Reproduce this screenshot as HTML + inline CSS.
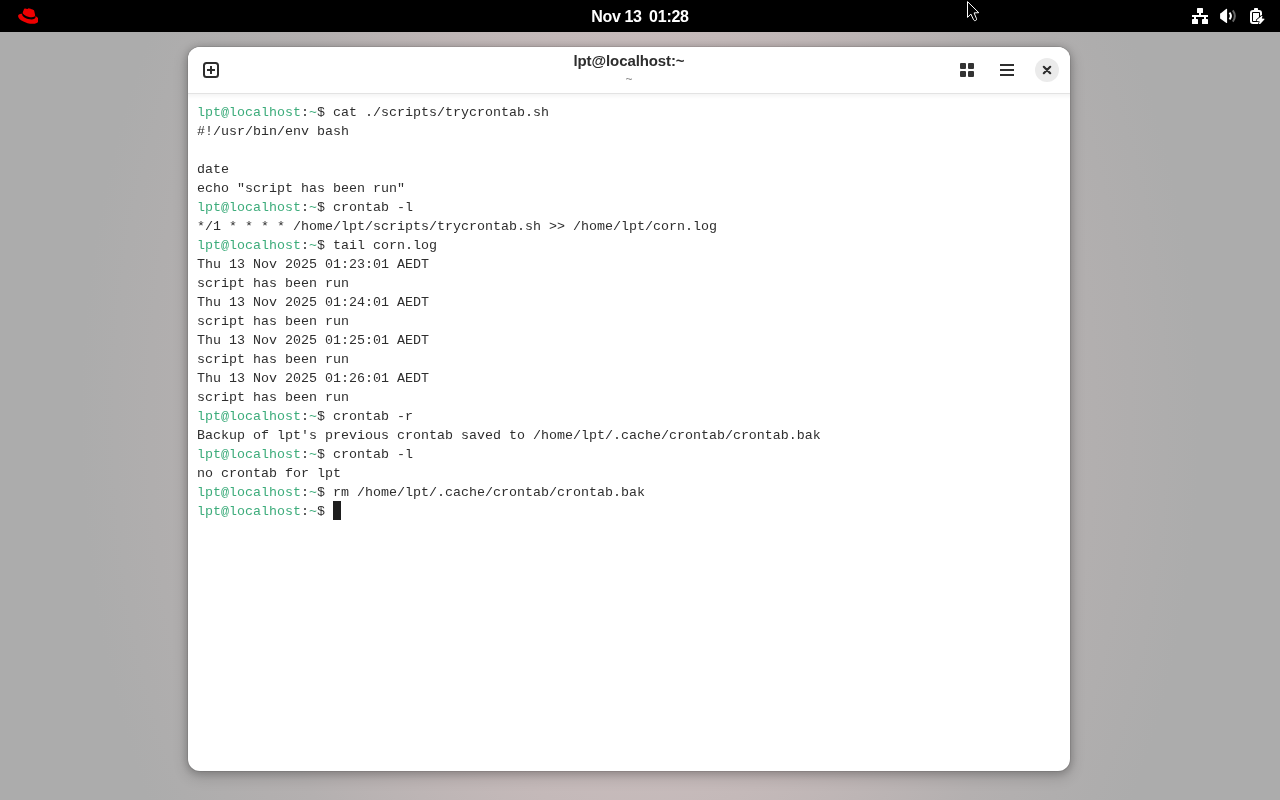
<!DOCTYPE html>
<html>
<head>
<meta charset="utf-8">
<title>lpt@localhost:~</title>
<style>
html,body{margin:0;padding:0;}
body{width:1280px;height:800px;overflow:hidden;position:relative;background:#acacac;font-family:"Liberation Sans",sans-serif;}
#bg{position:absolute;left:0;top:0;width:1280px;height:800px;
  background:radial-gradient(ellipse 560px 800px at 640px 420px, #dccacb 0%, #c4b9b9 50%, #b4b0b0 75%, #acacac 100%);}
#topbar{position:absolute;left:0;top:0;width:1280px;height:32px;background:#000;}
#clock{position:absolute;left:540px;width:200px;top:1px;height:32px;line-height:32px;text-align:center;color:#fff;font-weight:bold;font-size:16px;letter-spacing:-0.25px;word-spacing:-0.5px;white-space:pre;will-change:transform;}
#win{position:absolute;left:188px;top:47px;width:882px;height:724px;background:#fff;border-radius:12px;
  box-shadow:0 0 0 1px rgba(0,0,0,0.08),0 1px 8px 1px rgba(0,0,0,0.20),0 5px 14px 2px rgba(0,0,0,0.15);overflow:hidden;}
#hdr{position:absolute;left:0;top:0;width:882px;height:46px;border-bottom:1px solid #e3e3e3;background:#fff;}
#hdrsh{position:absolute;left:0;top:47px;width:882px;height:5px;background:linear-gradient(to bottom,rgba(0,0,0,0.04),rgba(0,0,0,0));}
#title{position:absolute;left:0;width:882px;top:5px;height:18px;line-height:18px;text-align:center;font-weight:bold;font-size:15px;letter-spacing:-0.1px;color:#2e2e2e;will-change:transform;}
#subtitle{position:absolute;left:0;width:882px;top:25px;height:14px;line-height:14px;text-align:center;font-size:12px;color:#8a8a8a;will-change:transform;}
#term{position:absolute;left:9px;top:56px;will-change:transform;margin:0;font-family:"Liberation Mono",monospace;font-size:13.333px;line-height:19px;color:#2e2e2e;white-space:pre;}
#term .g{color:#3dac7b;}
#cur{position:absolute;left:145px;top:454px;width:8px;height:19px;background:#1e1e1e;}
svg{position:absolute;display:block;}
</style>
</head>
<body>
<div id="bg"></div>
<div id="topbar">
  <svg style="left:17.6px;top:8px" width="20.8" height="16" viewBox="0 0 192 146"><path fill="#ee0000" d="M128,84c12.500,0,30.600-2.600,30.600-17.500a19.530,19.530,0,0,0-.300-3.400L150.900,30.700c-1.700-7.100-3.200-10.300-15.700-16.600C125.500,9.100,104.400,1,98.100,1,92.300,1,90.600,8.500,83.700,8.500,77,8.500,72.100,2.900,65.900,2.900c-6,0-9.900,4.100-12.900,12.500,0,0-8.400,23.700-9.500,27.200A6.430,6.430,0,0,0,43.300,44.500C43.300,53.700,79.600,84,128,84m32.400-11.400c1.700,8.200,1.700,9.100,1.700,10.100,0,14-15.700,21.800-36.400,21.800C79,104.500,38.100,77.100,38.100,59a18.350,18.350,0,0,1,1.500-7.300C22.800,52.500,1,55.500,1,74.700,1,106.200,75.600,145,134.600,145c45.300,0,56.700-20.500,56.700-36.700,0-12.700-11-27.100-30.900-35.700"/></svg>
  <div id="clock">Nov 13  01:28</div>
  <!-- network -->
  <svg style="left:1192px;top:8px" width="16" height="16" viewBox="0 0 16 16" fill="#fff"><rect x="5" y="0" width="6" height="5" rx="0.6"/><rect x="7" y="5" width="2" height="3"/><rect x="0" y="7" width="16" height="2"/><rect x="2" y="9" width="2" height="2"/><rect x="12" y="9" width="2" height="2"/><rect x="0" y="11" width="6" height="5" rx="0.6"/><rect x="10" y="11" width="6" height="5" rx="0.6"/></svg>
  <!-- volume -->
  <svg style="left:1219px;top:8px" width="18" height="16" viewBox="0 0 18 16"><path fill="#fff" d="M1.100 5.600 L1.800 5.200 L7.400 0.800 L8.100 1 L8.100 15 L7.400 15 L1.800 11 L1.100 10.600 Z"/><path fill="none" stroke="#fff" stroke-width="2" d="M10.500 4.700 Q13.300 8 10.500 11.300"/><path fill="none" stroke="#666" stroke-width="2" d="M13.800 2.300 Q17.900 8 13.800 13.700"/></svg>
  <!-- battery -->
  <svg style="left:1250px;top:8px" width="16" height="16" viewBox="0 0 16 16"><rect x="4" y="0" width="4" height="3" rx="0.700" fill="#fff"/><rect x="1" y="3" width="10" height="12" rx="2" fill="none" stroke="#fff" stroke-width="2"/><rect x="3" y="5" width="6" height="8" fill="#fff"/><path d="M11.500 7.900 L12.500 7.900 L11.800 10.400 L14.400 10.700 L14.400 11.600 L9.700 16.500 L8.800 16.200 L9.700 13.400 L6.700 13.100 L6.700 12.100 Z" fill="#fff" stroke="#000" stroke-width="1.500" paint-order="stroke" stroke-linejoin="round"/></svg>
</div>
<div id="win">
  <div id="hdr">
    <!-- new tab -->
    <svg style="left:15px;top:15px" width="16" height="16" viewBox="0 0 16 16"><rect x="1" y="1" width="14" height="14" rx="2.500" fill="none" stroke="#2e2e2e" stroke-width="2"/><rect x="4" y="7" width="8" height="2" fill="#2e2e2e"/><rect x="7" y="4" width="2" height="8" fill="#2e2e2e"/></svg>
    <div id="title">lpt@localhost:~</div>
    <div id="subtitle">~</div>
    <!-- grid -->
    <svg style="left:772px;top:16px" width="14" height="14" viewBox="0 0 14 14" fill="#333"><rect x="0" y="0" width="6" height="6" rx="1"/><rect x="8" y="0" width="6" height="6" rx="1"/><rect x="0" y="8" width="6" height="6" rx="1"/><rect x="8" y="8" width="6" height="6" rx="1"/></svg>
    <!-- menu -->
    <svg style="left:812px;top:17px" width="14" height="12" viewBox="0 0 14 12" fill="#2e2e2e"><rect x="0" y="0" width="14" height="2"/><rect x="0" y="5" width="14" height="2"/><rect x="0" y="10" width="14" height="2"/></svg>
    <!-- close -->
    <svg style="left:847px;top:11px" width="24" height="24" viewBox="0 0 24 24"><circle cx="12" cy="12" r="12" fill="#ebebeb"/><path d="M8.800 8.800 L15.200 15.200 M15.200 8.800 L8.800 15.200" stroke="#2e2e2e" stroke-width="2.200" stroke-linecap="round"/></svg>
  </div>
<div id="hdrsh"></div>
<pre id="term"><span class="g">lpt@localhost</span>:<span class="g">~</span>$ cat ./scripts/trycrontab.sh
#!/usr/bin/env bash

date
echo "script has been run"
<span class="g">lpt@localhost</span>:<span class="g">~</span>$ crontab -l
*/1 * * * * /home/lpt/scripts/trycrontab.sh >> /home/lpt/corn.log
<span class="g">lpt@localhost</span>:<span class="g">~</span>$ tail corn.log
Thu 13 Nov 2025 01:23:01 AEDT
script has been run
Thu 13 Nov 2025 01:24:01 AEDT
script has been run
Thu 13 Nov 2025 01:25:01 AEDT
script has been run
Thu 13 Nov 2025 01:26:01 AEDT
script has been run
<span class="g">lpt@localhost</span>:<span class="g">~</span>$ crontab -r
Backup of lpt's previous crontab saved to /home/lpt/.cache/crontab/crontab.bak
<span class="g">lpt@localhost</span>:<span class="g">~</span>$ crontab -l
no crontab for lpt
<span class="g">lpt@localhost</span>:<span class="g">~</span>$ rm /home/lpt/.cache/crontab/crontab.bak
<span class="g">lpt@localhost</span>:<span class="g">~</span>$ </pre>
  <div id="cur"></div>
</div>
<!-- mouse pointer -->
<svg style="left:960px;top:0px" width="26" height="26" viewBox="0 0 26 26"><path d="M7.500 1.600 L7.500 17.400 L10.900 14.100 L13.600 19.800 Q14.200 21 15.600 20.500 Q17 19.900 16.500 18.700 L14.100 12.900 L18.800 12.700 Z" fill="#000" stroke="#fff" stroke-width="1" stroke-linejoin="miter"/></svg>
</body>
</html>
